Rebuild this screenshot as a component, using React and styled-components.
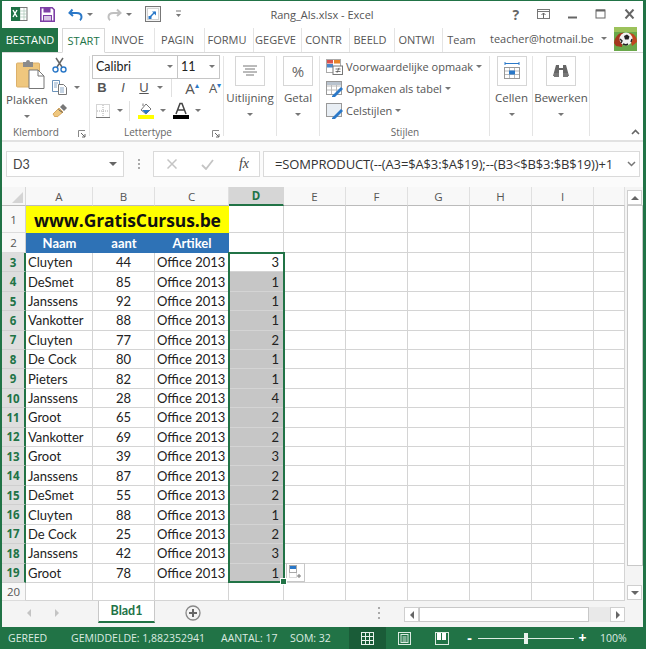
import React from "react";
import styled, { createGlobalStyle } from "styled-components";

const G = "#217346";
const Global = createGlobalStyle`
  html, body { margin: 0; padding: 0; background: #fff; }
  #root { width: 646px; height: 649px; overflow: hidden; }
  * { box-sizing: border-box; }
`;
const Win = styled.div`
  width: 646px; height: 649px; display: flex; flex-direction: column; background: #fff;
  border-top: 1px solid ${G}; font-family: "Open Sans", "Liberation Sans", sans-serif; color: #444; font-size: 11.5px;
`;
const Body = styled.div`
  flex: 1; min-height: 0; display: flex; flex-direction: column;
  border-left: 2px solid ${G}; border-right: 3px solid ${G};
`;
const TitleBar = styled.div`height: 27px; display: flex; align-items: center; position: relative; padding-left: 9px;`;
const QuickIcon = styled.span`display: flex; align-items: center; width: ${p => p.$w}px; flex: none; margin-left: ${p => p.$ml || 0}px;`;
const TitleText = styled.div`width: 242px; margin-left: 16px; text-align: center; font-size: 11px; color: #555; flex: none;`;
const WinButtons = styled.div`display: flex; align-items: center; margin-left: auto; margin-right: -1px;`;
const WinBtn = styled.span`width: 28.5px; display: flex; justify-content: center; font-weight: 700; color: #666; font-size: 14px;`;

const TabRow = styled.div`height: 25px; display: flex; align-items: stretch; border-bottom: 1px solid #d8d8d8; color: #555;`;
const FileTab = styled.div`width: 56px; background: ${G}; color: #fff; font-size: 11px; display: flex; align-items: center; justify-content: center; height: 24px;`;
const ActiveTab = styled.div`
  width: 43px; margin-left: 4px; height: 25px; background: #fff; color: ${G}; border: 1px solid #d8d8d8; border-bottom: 1px solid #fff;
  font-size: 11px; display: flex; align-items: center; justify-content: center;
`;
const Tab = styled.div`width: ${p => p.$w}px; height: 24px; padding-right: 4px; font-size: 11px; display: flex; align-items: center; justify-content: center; border-right: ${p => p.$sep ? "1px solid #e4e4e4" : "none"};`;
const Account = styled.div`margin-left: 6px; width: 124px; font-size: 11px; display: flex; align-items: center; white-space: nowrap; gap: 7px; padding-bottom: 2px; color:#555;`;

const Ribbon = styled.div`height: 90px; display: flex; border-bottom: 2px solid #e2e2e2; position: relative;`;
const Group = styled.div`
  width: ${p => p.$w}px; flex: none; display: flex; flex-direction: column; position: relative; padding-top: 3px;
  &::after { content: ""; position: absolute; right: 0; top: 3px; bottom: 4px; width: 1px; background: #e4e4e4; }
`;
const GroupBody = styled.div`flex: 1; min-height: 0; display: flex;`;
const FontGroupBody = styled(GroupBody)`flex-direction: column; padding-left: 2px;`;
const StyleGroupBody = styled(GroupBody)`flex-direction: column; padding-left: 6px;`;
const GroupLabel = styled.div`height: 15px; position: relative; font-size: 10px; color: #666; text-align: center; line-height: 15px; padding-right: ${p => p.$pr || 0}px;`;
const Launcher = styled.svg`position: absolute; right: 4px; top: 5px;`;
const Col = styled.div`display: flex; flex-direction: column; align-items: center; width: ${p => p.$w}px; padding-top: ${p => p.$pt || 0}px;`;
const ClipWrap = styled.span`display: flex; margin-left: 6px; flex: none;`;
const BigLabel = styled.div`font-size: 11.5px; color: #555; line-height: 16px; white-space: nowrap; margin-top: ${p => p.$mt || 0}px;`;
const Caret = styled.i`
  display: inline-block; width: 0; height: 0; border-left: 3px solid transparent; border-right: 3px solid transparent;
  border-top: 3px solid #777; flex: none; margin: ${p => p.$m || "0"};
`;
const BigBtn = styled.div`
  width: 30px; height: 30px; border: 1px solid #d6d6d6; display: flex; align-items: center; justify-content: center;
  color: #666; background: #fff; margin-bottom: 4px; font-size: 15px;
`;
const StackCol = styled.div`display: flex; flex-direction: column; gap: 7.5px; padding-top: 2px;`;
const SmallRow = styled.div`display: flex; align-items: center; height: 15px;`;
const FontRow = styled.div`display: flex; height: 24px; border: 1px solid #c6c6c6; width: 128px; margin-top: -1px;`;
const FontBox = styled.div`flex: ${p => p.$fixed ? `0 0 ${p.$fixed}px` : 1}; display: flex; align-items: center; font-family: Lato, sans-serif; font-size: 12.5px; color: #222; padding: 0 4px 0 3px; justify-content: space-between; border-right: ${p => p.$sep ? "1px solid #c6c6c6" : "none"};`;
const FmtRow = styled.div`display: flex; align-items: center; height: 18px; margin-top: ${p => p.$mt}px; padding-left: ${p => p.$pl}px; color: #555;`;
const Fmt = styled.span`width: ${p => p.$w}px; flex: none; text-align: center; font-size: ${p => p.$fs || 13}px; font-weight: ${p => p.$b ? 700 : 400}; font-style: ${p => p.$i ? "italic" : "normal"}; text-decoration: ${p => p.$u ? "underline" : "none"}; color: #555; font-family: ${p => p.$sans ? '"Open Sans", sans-serif' : '"Liberation Sans", sans-serif'};`;
const Grow = styled.sup`font-size: 8px; color: #2a78c8;`;
const VSep = styled.span`width: 1px; height: ${p => p.$h}px; background: #e0e0e0; margin: 0 ${p => p.$m}px; flex: none;`;
const StyleRow = styled.div`display: flex; align-items: center; gap: 3px; height: 22px; font-size: 11px; color: #555; white-space: nowrap;`;
const Collapse = styled.svg`position: absolute; right: 3px; bottom: 5px;`;

const FormulaBar = styled.div`height: 45px; display: flex; align-items: flex-start; padding: 9px 3px 0 4px; background: #fbfbfb;`;
const BarBox = styled.div`
  height: 26px; background: #fff; border: 1px solid #dadada; display: flex; align-items: center; width: ${p => p.$w ? p.$w + "px" : "auto"};
  flex: ${p => p.$w ? "none" : 1}; padding: ${p => p.$pad}; margin-left: ${p => p.$ml || 0}px; justify-content: space-between;
`;
const NameText = styled.span`font-family: Lato, sans-serif; font-size: 12.5px; color: #444;`;
const FormulaText = styled.span`font-family: "Open Sans", sans-serif; font-size: 13px; color: #333; white-space: nowrap; letter-spacing: -.14px;`;
const Dots = styled.span`width: 29px; display: flex; flex-direction: column; align-items: center; justify-content: center; gap: 2px; height: 26px; flex: none;`;
const Dot = styled.i`width: 2px; height: 2px; background: #aaa; display: block;`;
const FxText = styled.span`font-family: "Liberation Serif", serif; font-style: italic; font-size: 14px; color: #444;`;

const SheetArea = styled.div`height: 414px; display: flex; flex: none;`;
const Sheet = styled.div`
  width: 623px; flex: none; display: grid; position: relative;
  grid-template-columns: 24px 67px 62px 74px 55px 62px 62px 62px 62px 62px 31px;
  grid-template-rows: 19px 27px 20px repeat(17, 19.41px) 18px;
  font-family: Lato, "Liberation Sans", sans-serif; font-size: 13px; color: #222;
  border-bottom: 1px solid #bdbdbd; border-right: 1px solid #dadada;
`;
const Corner = styled.div`background: #f6f6f6; border-right: 1px solid #d8d8d8; border-bottom: 1px solid #bbb; position: relative; overflow: hidden;
  &::after { content: ""; position: absolute; right: 2px; bottom: 2px; border-style: solid; border-width: 0 0 11px 11px; border-color: transparent transparent #d4d4d4 transparent; }
`;
const ColHead = styled.div`
  display: flex; align-items: center; justify-content: center; font-family: "Open Sans", sans-serif; font-size: 11.5px;
  background: ${p => p.$on ? "#d6d6d6" : "#f8f8f8"}; color: ${p => p.$on ? G : "#555"}; font-weight: ${p => p.$on ? 700 : 400};
  border-right: 1px solid ${p => p.$on ? "#d6d6d6" : "#e0e0e0"}; border-bottom: ${p => p.$on ? `2px solid ${G}` : "1px solid #bbb"};
`;
const RowHead = styled.div`
  display: flex; align-items: center; justify-content: center; font-family: "Open Sans", sans-serif; font-size: 11.5px;
  background: ${p => p.$on ? "#dedede" : "#f8f8f8"}; color: ${p => p.$on ? G : "#555"}; font-weight: ${p => p.$on ? 700 : 400};
  border-right: ${p => p.$on ? `2px solid ${G}` : "1px solid #d0d0d0"}; border-bottom: 1px solid ${p => p.$on ? "#cfcfcf" : "#dcdcdc"};
`;
const Cell = styled.div`
  display: flex; align-items: center; padding: 0 2px; white-space: nowrap; overflow: hidden;
  justify-content: ${p => p.$a || "flex-start"}; background: ${p => p.$bg || "#fff"}; padding-right: ${p => p.$a === "flex-end" ? 4 : 2}px;
  border-right: 1px solid #d4d4d4; border-bottom: 1px solid #d4d4d4;
`;
const Banner = styled.div`
  grid-column: 2 / 5; background: #ffff00; display: flex; align-items: center; justify-content: center;
  font-family: "Open Sans", sans-serif; font-weight: 700; font-size: 17.5px; color: #111; letter-spacing: -.1px;
`;
const HeadCell = styled.div`background: #2e72b6; color: #fff; font-weight: 700; display: flex; align-items: center; justify-content: center; font-size: 13px;`;
const Selection = styled.div`
  position: absolute; grid-column: 5 / 6; grid-row: 4 / 21; left: -1px; right: -1px; top: -1px; bottom: 0; border: 2px solid ${G}; pointer-events: none;
  &::after { content: ""; position: absolute; right: -4px; bottom: -4px; width: 5px; height: 5px; background: ${G}; border: 1px solid #fff; box-sizing: content-box; }
`;
const Flash = styled.div`
  position: absolute; left: 56px; bottom: -1px; width: 19px; height: 19px; background: #fff; border: 1px solid #c8c8c8;
  display: flex; align-items: center; justify-content: center;
`;
const VScroll = styled.div`width: 18px; display: flex; flex-direction: column; padding: 3px 0 0 2px; background: #f4f4f4; flex: none;`;
const SBtn = styled.div`
  width: 15px; height: 15px; background: #fff; border: 1px solid #cfcfcf; flex: none; display: flex; align-items: center; justify-content: center;
  margin-bottom: ${p => p.$mb || 0}px;
`;
const Thumb = styled.div`
  background: #fff; border: 1px solid #c8c8c8; flex: ${p => p.$w ? "none" : 1}; width: ${p => p.$w ? p.$w + "px" : "auto"}; height: ${p => p.$w ? "15px" : "auto"};
`;
const Gap = styled.div`flex: ${p => p.$h ? `0 0 ${p.$h}px` : 1};`;
const Arrow = styled.i`
  display: block; width: 0; height: 0; border-style: solid;
  ${p => p.$d === "up" && "border-width: 0 4px 4px; border-color: transparent transparent #666;"}
  ${p => p.$d === "down" && "border-width: 4px 4px 0; border-color: #666 transparent transparent;"}
  ${p => p.$d === "left" && `border-width: 4px 4px 4px 0; border-color: transparent ${p.$c || "#666"} transparent transparent;`}
  ${p => p.$d === "right" && `border-width: 4px 0 4px 4px; border-color: transparent transparent transparent ${p.$c || "#666"};`}
`;

const TabStrip = styled.div`height: 26px; display: flex; align-items: flex-start; background: #f4f4f4; flex: none;`;
const SheetNav = styled.div`width: 96px; height: 24px; display: flex; align-items: center; padding-left: 25px; gap: 24px;`;
const SheetTab = styled.div`
  width: 57px; height: 23px; background: #fff; color: ${G}; font-family: Lato, sans-serif; font-weight: 700; font-size: 12.5px; margin-top: -1px;
  display: flex; align-items: center; justify-content: center; border: 1px solid #c8c8c8; border-top: none; border-bottom: 2px solid ${G};
`;
const AddWrap = styled.div`width: 249px; padding-left: 30px; height: 24px; display: flex; align-items: center;`;
const HDots = styled.div`display: flex; flex-direction: column; gap: 3px; margin-left: 177px;`;
const HScroll = styled.div`width: 221px; height: 15px; margin-top: 6px; display: flex; flex: none; background: #e9e9e9;`;

const Status = styled.div`
  height: 22px; flex: none; background: ${G}; color: #dcebe2; display: flex; align-items: center; font-size: 10.5px;
`;
const StatusText = styled.span`margin-left: ${p => p.$ml}px; white-space: nowrap; width: ${p => p.$w}px; flex: none;`;
const ViewBtn = styled.div`width: 37px; height: 22px; display: flex; align-items: center; justify-content: center; background: ${p => p.$on ? "#1a5c38" : "transparent"}; flex: none;`;
const Zoom = styled.div`display: flex; align-items: center; margin-left: 5px; flex: none;`;
const ZoomMark = styled.span`color: #fff; font-weight: 700; font-size: 14px; line-height: 14px; width: 9px; text-align: center;`;
const ZoomTrack = styled.div`width: 96px; height: 1px; background: #dcebe2; margin: 0 4px; position: relative;`;
const ZoomKnob = styled.i`position: absolute; left: 46px; top: -5px; width: 4px; height: 11px; background: #e8f1ec;`;

const Icon = ({ w, h, children }) => <svg width={w} height={h} viewBox={`0 0 ${w} ${h}`}>{children}</svg>;

const ExcelLogo = () => (
  <Icon w={17} h={16}>
    <rect x="6" y="1.5" width="10" height="13" fill="#fff" stroke="#777" />
    <path d="M9 2v12M13 2v12M6 5h10M6 8h10M6 11h10" stroke="#a8c4b4" strokeWidth=".7" />
    <rect x="0" y="1" width="9" height="14" fill="#1e7145" />
    <path d="M2 4l4 7M6 4l-4 7" stroke="#fff" strokeWidth="1.4" />
  </Icon>
);
const SaveIcon = () => (
  <Icon w={15} h={15}>
    <path d="M.8.8h11.4l2 2v11.4H.8z" fill="#fff" stroke="#7d3fa6" strokeWidth="1.6" />
    <rect x="3.5" y="1" width="7" height="4.5" fill="#7d3fa6" />
    <rect x="3.5" y="8.5" width="8" height="5.5" fill="#d9c6e6" stroke="#7d3fa6" />
  </Icon>
);
const Undo = () => (
  <Icon w={15} h={13}>
    <path d="M4.5 1.5 1.5 5l3.5 3" fill="none" stroke="#2a78c8" strokeWidth="2" />
    <path d="M2 5h6.5c3 0 5 1.5 5 4 0 1.4-.6 2.6-1.6 3.2" fill="none" stroke="#2a78c8" strokeWidth="2" />
  </Icon>
);
const Redo = () => (
  <Icon w={15} h={13}>
    <path d="M10 1.5 13.5 5 10 8" fill="none" stroke="#c0c0c0" strokeWidth="2" />
    <path d="M13 5H6.5C3.5 5 1.5 6.5 1.5 9c0 1.4.6 2.6 1.6 3.2" fill="none" stroke="#c0c0c0" strokeWidth="2" />
  </Icon>
);
const PreviewIcon = () => (
  <Icon w={16} h={16}>
    <rect x=".5" y=".5" width="15" height="15" fill="#f4f4f4" stroke="#777" />
    <rect x="2.5" y="2.5" width="11" height="11" fill="#fff" stroke="#aaa" strokeDasharray="1 1" />
    <path d="M5 11l5-5" stroke="#2a78c8" strokeWidth="1.5" />
    <path d="M7 5.5h4v4z" fill="#2a78c8" />
    <rect x="3.5" y="10" width="3" height="3" fill="#2a78c8" />
  </Icon>
);
const Customize = () => (
  <Icon w={7} h={8}><path d="M1 1h5" stroke="#777" /><path d="M1 4l2.5 3L6 4z" fill="#777" /></Icon>
);
const Restore = () => (
  <Icon w={14} h={10}><rect x=".5" y=".5" width="12" height="9" fill="none" stroke="#777" /><path d="M.5 2.5h12" stroke="#777" /><path d="M6.5 9V4M4.5 6l2-2 2 2" fill="none" stroke="#666" /></Icon>
);
const Minimize = () => <Icon w={12} h={10}><path d="M1 8.5h9" stroke="#666" strokeWidth="2" /></Icon>;
const Maximize = () => <Icon w={12} h={10}><rect x="1" y="1" width="9" height="8" fill="none" stroke="#666" /><path d="M1 1.5h9" stroke="#666" strokeWidth="2" /></Icon>;
const Close = () => <Icon w={12} h={10}><path d="M1.5.5l8 9M9.5.5l-8 9" stroke="#666" strokeWidth="2" /></Icon>;

const Avatar = () => (
  <svg width="23" height="24" viewBox="0 0 23 24" style={{ flex: "none" }}>
    <rect width="23" height="24" fill="#6aa84a" />
    <rect width="23" height="5" fill="#9cc25b" />
    <path d="M0 16C1 8 7 5 10 6L8 20 2 19z" fill="#a5371e" />
    <path d="M15 6c5 0 8 4 8 9l-5 4z" fill="#c0451f" />
    <circle cx="12" cy="12" r="6.5" fill="#f2f2f2" />
    <path d="M10 9l3-1.5 2.5 2-1 3h-3.5z" fill="#222" />
    <path d="M6 12l2 2-1 2M17 15l1-3M9 17l3 1 2-1" stroke="#222" strokeWidth="1.4" fill="none" />
  </svg>
);

const Clipboard = () => (
  <Icon w={29} h={30}>
    <rect x=".5" y="4" width="23" height="24" rx="1" fill="#efc77e" stroke="#dcb06a" />
    <path d="M7 3h3a2 2 0 0 1 4 0h3v5H7z" fill="#8b8b8b" />
    <path d="M13 11h9l6 6v12.5H13z" fill="#fff" stroke="#777" />
    <path d="M22 11v6h6" fill="none" stroke="#777" />
  </Icon>
);
const Scissors = () => (
  <Icon w={15} h={16}>
    <path d="M4 1l6 9M11 1L5 10" stroke="#666" strokeWidth="1.5" />
    <circle cx="3.5" cy="12.5" r="2.5" fill="none" stroke="#2a78c8" strokeWidth="1.4" />
    <circle cx="11.5" cy="12.5" r="2.5" fill="none" stroke="#2a78c8" strokeWidth="1.4" />
  </Icon>
);
const CopyIcon = () => (
  <Icon w={16} h={15}>
    <path d="M.5.5h7l0 11h-7z" fill="#fff" stroke="#6c93ba" />
    <path d="M6.5 4.5h5l3 3v7h-8z" fill="#fff" stroke="#777" />
    <path d="M2 3h4M2 5h3M2 7h3M8 8h4M8 10h4M8 12h4" stroke="#6c93ba" strokeWidth=".8" />
  </Icon>
);
const Brush = () => (
  <Icon w={16} h={15}>
    <path d="M1 11l6-6 4 4-6 5-1-1-1 1z" fill="#efc77e" stroke="#d8a860" />
    <path d="M8 4l3-3 4 4-3 3z" fill="#777" />
    <path d="M6.5 6.5l4 3" stroke="#555" />
  </Icon>
);
const LauncherIcon = () => (
  <Launcher width="8" height="8" viewBox="0 0 8 8">
    <path d="M.5 7V.5H7" fill="none" stroke="#888" />
    <path d="M3 3l4 4M7 4v3H4" fill="none" stroke="#666" />
  </Launcher>
);
const BorderIcon = () => (
  <Icon w={14} h={14}>
    <rect x=".5" y=".5" width="13" height="13" fill="none" stroke="#aaa" strokeDasharray="1 1" />
    <path d="M7 1v12M1 7h12" stroke="#aaa" strokeDasharray="1 1" />
    <path d="M0 13.5h14" stroke="#777" />
  </Icon>
);
const FillIcon = () => (
  <Icon w={16} h={17}>
    <path d="M3 8l5-6 5 5-5 5z" fill="#fff" stroke="#777" />
    <path d="M4 8h8l-4 4z" fill="#2a78c8" />
    <path d="M5 4V1.5" stroke="#777" />
    <rect y="13" width="16" height="4" fill="#ffff00" />
  </Icon>
);
const FontColor = () => (
  <Icon w={16} h={17}>
    <path d="M3 12 7 1.5h2L13 12M5 8h6" fill="none" stroke="#444" strokeWidth="1.5" />
    <rect y="13" width="16" height="4" fill="#000" />
  </Icon>
);
const AlignIcon = () => (
  <Icon w={14} h={12}><path d="M0 1h14M2 4h10M0 7h14M3 10h8" stroke="#777" /></Icon>
);
const CondIcon = () => (
  <Icon w={17} h={16}>
    <rect x=".5" y=".5" width="14" height="13" fill="#fff" stroke="#aaa" />
    <rect x="1" y="1" width="6" height="3.5" fill="#d9534f" />
    <rect x="8" y="1" width="6" height="3.5" fill="#e8842a" />
    <rect x="1" y="5" width="6" height="3.5" fill="#4a86c8" />
    <rect x="7" y="7" width="9.5" height="8.5" fill="#fff" stroke="#777" />
    <path d="M9.5 10h5M9.5 12.5h5M13 8.8l-2 5" stroke="#555" strokeWidth=".8" />
  </Icon>
);
const TableIcon = ({ plain }) => (
  <Icon w={17} h={16}>
    <rect x=".5" y=".5" width="15" height="13" fill={plain ? "#e8eef4" : "#fff"} stroke="#999" />
    {!plain && <path d="M5.5 1v12M10.5 1v12M1 5h14M1 9h14" stroke="#bbb" />}
    {!plain && <rect x="1" y="1" width="14" height="3" fill="#b9c3ce" />}
    <path d="M6 15l9-9 2 2-8 8H6z" fill="#2a78c8" />
  </Icon>
);
const CellsIcon = () => (
  <Icon w={16} h={17}>
    <path d="M1 1.5h14M1 0v3M15 0v3" stroke="#2a78c8" />
    <rect x=".5" y="5.5" width="15" height="11" fill="#fff" stroke="#999" />
    <path d="M5.5 6v10M10.5 6v10M1 9h14M1 12.5h14" stroke="#bbb" />
    <rect x="5" y="8.5" width="6" height="4" fill="#2a78c8" />
  </Icon>
);
const Binoculars = () => (
  <Icon w={16} h={14}>
    <path d="M3 1h3v3h4V1h3l3 11h-6V6H6v6H0z" fill="#666" />
    <rect x="1" y="9" width="5" height="4" fill="#777" />
    <rect x="10" y="9" width="5" height="4" fill="#777" />
  </Icon>
);
const FlashIcon = () => (
  <Icon w={13} h={14}>
    <rect x=".5" y=".5" width="7" height="7" fill="#fff" stroke="#aaa" />
    <rect x="1" y="1" width="6" height="3" fill="#2a78c8" />
    <path d="M.5 8.5v4h7v-4" fill="none" stroke="#bbb" strokeDasharray="1 1" />
    <path d="M8 11h4M10 9v4" stroke="#777" />
  </Icon>
);
const GridView = () => (
  <Icon w={13} h={13}><rect x=".5" y=".5" width="12" height="12" fill="none" stroke="#e8f1ec" /><path d="M4.5 1v11M8.5 1v11M1 4.5h11M1 8.5h11" stroke="#e8f1ec" /></Icon>
);
const PageView = () => (
  <Icon w={13} h={13}><rect x=".5" y=".5" width="12" height="12" fill="none" stroke="#dcebe2" /><rect x="3" y="2.5" width="7" height="8" fill="none" stroke="#dcebe2" /><path d="M4.5 5h4M4.5 7h4M4.5 9h4" stroke="#dcebe2" /></Icon>
);
const BreakView = () => (
  <Icon w={14} h={13}><rect x=".5" y=".5" width="13" height="12" fill="none" stroke="#dcebe2" /><rect x="2" y="1" width="4" height="7" fill="#fff" /><rect x="7" y="1" width="4" height="7" fill="#fff" /></Icon>
);
const AddSheet = () => (
  <Icon w={16} h={16}><circle cx="8" cy="8" r="7" fill="none" stroke="#888" strokeWidth="1.3" /><path d="M4 8h8M8 4v8" stroke="#666" strokeWidth="2" /></Icon>
);

const tabs = [["INVOE", 50, 1], ["PAGIN", 50, 1], ["FORMU", 49, 1], ["GEGEVE", 48, 1], ["CONTR", 48, 1], ["BEELD", 45, 1], ["ONTWI", 48, 1], ["Team", 41, 0]];
const colNames = ["A", "B", "C", "D", "E", "F", "G", "H", "I", ""];
const data = [["Cluyten",44,3],["DeSmet",85,1],["Janssens",92,1],["Vankotter",88,1],["Cluyten",77,2],["De Cock",80,1],["Pieters",82,1],["Janssens",28,4],["Groot",65,2],["Vankotter",69,2],["Groot",39,3],["Janssens",87,2],["DeSmet",55,2],["Cluyten",88,1],["De Cock",25,2],["Janssens",42,3],["Groot",78,1]];
const Empties = ({ n, k }) => Array.from({ length: n }, (_, i) => <Cell key={`${k}-${i}`} />);

export default function App() {
  return (
    <Win>
      <Global />
      <Body>
        <TitleBar>
          <QuickIcon $w={29}><ExcelLogo /></QuickIcon>
          <QuickIcon $w={28}><SaveIcon /></QuickIcon>
          <QuickIcon $w={39}><Undo /><Caret $m="0 0 0 4px" /></QuickIcon>
          <QuickIcon $w={38}><Redo /><Caret $m="0 0 0 4px" /></QuickIcon>
          <QuickIcon $w={30}><PreviewIcon /></QuickIcon>
          <QuickIcon $w={10}><Customize /></QuickIcon>
          <TitleText>Rang_Als.xlsx - Excel</TitleText>
          <WinButtons>
            <WinBtn>?</WinBtn>
            <WinBtn><Restore /></WinBtn>
            <WinBtn><Minimize /></WinBtn>
            <WinBtn><Maximize /></WinBtn>
            <WinBtn><Close /></WinBtn>
          </WinButtons>
        </TitleBar>
        <TabRow>
          <FileTab>BESTAND</FileTab>
          <ActiveTab>START</ActiveTab>
          {tabs.map(([t, w, s]) => <Tab key={t} $w={w} $sep={!!s}>{t}</Tab>)}
          <Account>teacher@hotmail.be <Caret /><Avatar /></Account>
        </TabRow>
        <Ribbon>
          <Group $w={88}>
            <GroupBody>
              <Col $w={50} $pt={3}>
                <ClipWrap><Clipboard /></ClipWrap>
                <BigLabel $mt={3}>Plakken</BigLabel>
                <Caret $m="7px 0 0" />
              </Col>
              <StackCol>
                <SmallRow><Scissors /></SmallRow>
                <SmallRow><CopyIcon /><Caret $m="0 0 0 6px" /></SmallRow>
                <SmallRow><Brush /></SmallRow>
              </StackCol>
            </GroupBody>
            <GroupLabel $pr={20}>Klembord<LauncherIcon /></GroupLabel>
          </Group>
          <Group $w={134}>
            <FontGroupBody>
              <FontRow>
                <FontBox $sep>Calibri<Caret /></FontBox>
                <FontBox $fixed={41}>11<Caret /></FontBox>
              </FontRow>
              <FmtRow $mt={0} $pl={0}>
                <Fmt $w={20} $b>B</Fmt>
                <Fmt $w={22} $i>I</Fmt>
                <Fmt $w={20} $u>U</Fmt>
                <Caret $m="0 0 0 3px" />
                <VSep $h={18} $m={8} />
                <Fmt $w={24} $sans $fs={15}>A<Grow>▴</Grow></Fmt>
                <Fmt $w={22} $sans>A<Grow>▾</Grow></Fmt>
              </FmtRow>
              <FmtRow $mt={5} $pl={4}>
                <BorderIcon />
                <Caret $m="0 0 0 7px" />
                <VSep $h={20} $m={6} />
                <QuickIcon $w={16} $ml={2}><FillIcon /></QuickIcon>
                <Caret $m="0 0 0 6px" />
                <QuickIcon $w={16} $ml={7}><FontColor /></QuickIcon>
                <Caret $m="0 0 0 6px" />
              </FmtRow>
            </FontGroupBody>
            <GroupLabel $pr={18}>Lettertype<LauncherIcon /></GroupLabel>
          </Group>
          <Group $w={53}>
            <GroupBody><Col $w={52}><BigBtn><AlignIcon /></BigBtn><BigLabel>Uitlijning</BigLabel><Caret $m="7px 0 0" /></Col></GroupBody>
          </Group>
          <Group $w={43}>
            <GroupBody><Col $w={42}><BigBtn>%</BigBtn><BigLabel>Getal</BigLabel><Caret $m="7px 0 0" /></Col></GroupBody>
          </Group>
          <Group $w={170}>
            <StyleGroupBody>
              <StyleRow><CondIcon />Voorwaardelijke opmaak<Caret /></StyleRow>
              <StyleRow><TableIcon />Opmaken als tabel<Caret /></StyleRow>
              <StyleRow><TableIcon plain />Celstijlen<Caret /></StyleRow>
            </StyleGroupBody>
            <GroupLabel>Stijlen</GroupLabel>
          </Group>
          <Group $w={43}>
            <GroupBody><Col $w={44}><BigBtn><CellsIcon /></BigBtn><BigLabel>Cellen</BigLabel><Caret $m="7px 0 0" /></Col></GroupBody>
          </Group>
          <Group $w={57}>
            <GroupBody><Col $w={56}><BigBtn><Binoculars /></BigBtn><BigLabel>Bewerken</BigLabel><Caret $m="7px 0 0" /></Col></GroupBody>
          </Group>
          <Collapse width="9" height="6" viewBox="0 0 9 6"><path d="M1 5l3.5-3.5L8 5" fill="none" stroke="#666" strokeWidth="1.6" /></Collapse>
        </Ribbon>
        <FormulaBar>
          <BarBox $w={118} $pad="0 6px 0 6px"><NameText>D3</NameText><Arrow $d="down" /></BarBox>
          <Dots><Dot /><Dot /><Dot /></Dots>
          <BarBox $w={107} $pad="0 10px 0 13px">
            <Icon w={10} h={10}><path d="M.5.5l9 9M9.5.5l-9 9" stroke="#c4c4c4" strokeWidth="1.5" /></Icon>
            <Icon w={13} h={11}><path d="M1 6l4 4 7-9" fill="none" stroke="#c4c4c4" strokeWidth="1.8" /></Icon>
            <FxText>fx</FxText>
          </BarBox>
          <BarBox $ml={3} $pad="0 3px 0 11px">
            <FormulaText>=SOMPRODUCT(--(A3=$A$3:$A$19);--(B3&lt;$B$3:$B$19))+1</FormulaText>
            <Icon w={9} h={6}><path d="M1 1l3.5 3.5L8 1" fill="none" stroke="#777" strokeWidth="1.5" /></Icon>
          </BarBox>
        </FormulaBar>
        <SheetArea>
          <Sheet>
            <Corner />
            {colNames.map((c, i) => <ColHead key={i} $on={c === "D"}>{c}</ColHead>)}
            <RowHead>1</RowHead>
            <Banner>www.GratisCursus.be</Banner>
            <Empties n={7} k="r1" />
            <RowHead>2</RowHead>
            <HeadCell>Naam</HeadCell><HeadCell>aant</HeadCell><HeadCell>Artikel</HeadCell>
            <Empties n={7} k="r2" />
            {data.map(([n, a, r], i) => (
              <React.Fragment key={i}>
                <RowHead $on>{i + 3}</RowHead>
                <Cell>{n}</Cell>
                <Cell $a="center">{a}</Cell>
                <Cell>Office 2013</Cell>
                <Cell $a="flex-end" $bg={i ? "#c6c6c6" : "#fff"}>{r}</Cell>
                <Empties n={6} k={`d${i}`} />
              </React.Fragment>
            ))}
            <RowHead>20</RowHead>
            <Empties n={10} k="r20" />
            <Selection><Flash><FlashIcon /></Flash></Selection>
          </Sheet>
          <VScroll>
            <SBtn><Arrow $d="up" /></SBtn>
            <Thumb />
            <Gap $h={19} />
            <SBtn $mb={1}><Arrow $d="down" /></SBtn>
          </VScroll>
        </SheetArea>
        <TabStrip>
          <SheetNav><Arrow $d="left" $c="#c4c4c4" /><Arrow $d="right" $c="#c4c4c4" /></SheetNav>
          <SheetTab>Blad1</SheetTab>
          <AddWrap>
            <AddSheet />
            <HDots><Dot /><Dot /><Dot /></HDots>
          </AddWrap>
          <HScroll>
            <SBtn><Arrow $d="left" /></SBtn>
            <Thumb $w={170} />
            <Gap />
            <SBtn><Arrow $d="right" /></SBtn>
          </HScroll>
        </TabStrip>
        <Status>
          <StatusText $ml={6} $w={63}>GEREED</StatusText>
          <StatusText $ml={0} $w={149}>GEMIDDELDE: 1,882352941</StatusText>
          <StatusText $ml={1} $w={69}>AANTAL: 17</StatusText>
          <StatusText $ml={0} $w={59}>SOM: 32</StatusText>
          <ViewBtn $on><GridView /></ViewBtn>
          <ViewBtn><PageView /></ViewBtn>
          <ViewBtn><BreakView /></ViewBtn>
          <Zoom>
            <ZoomMark>-</ZoomMark>
            <ZoomTrack><ZoomKnob /></ZoomTrack>
            <ZoomMark>+</ZoomMark>
          </Zoom>
          <StatusText $ml={13} $w={30}>100%</StatusText>
        </Status>
      </Body>
    </Win>
  );
}
